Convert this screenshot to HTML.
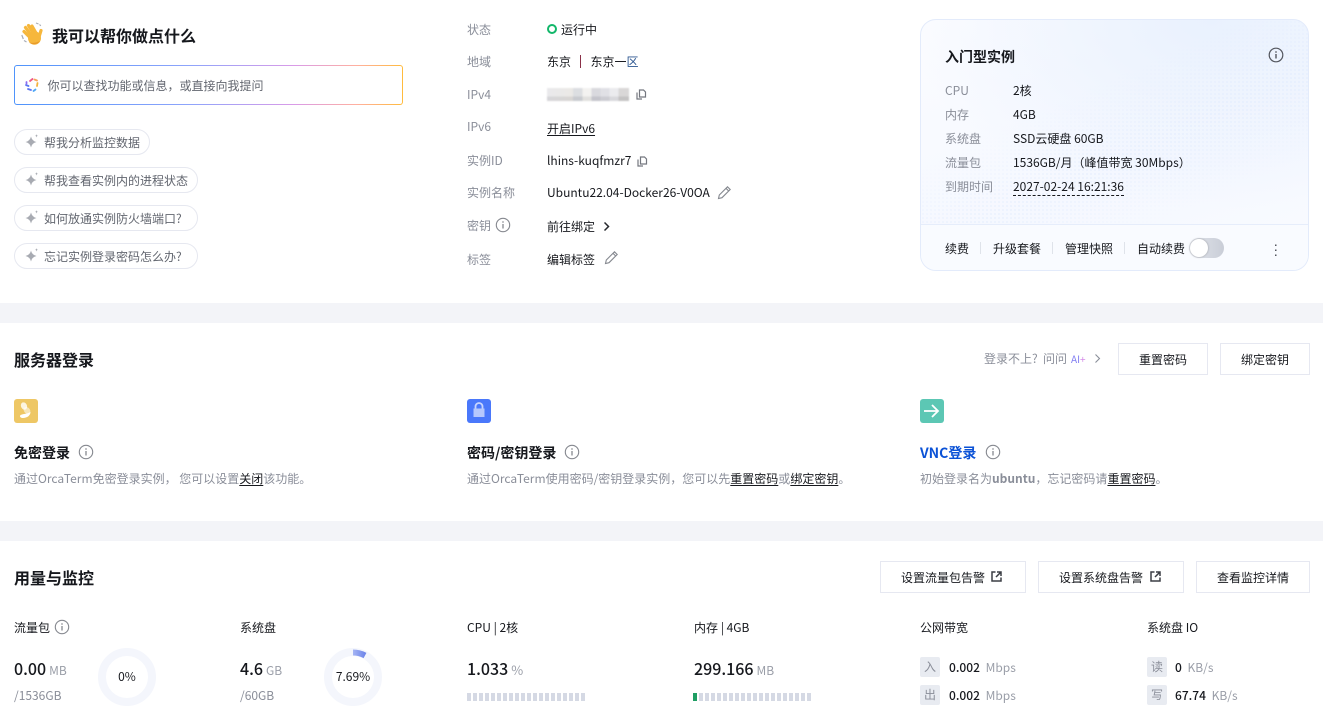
<!DOCTYPE html>
<html lang="zh"><head><meta charset="utf-8"><title>实例详情</title>
<style>
html,body{margin:0;padding:0;background:#fff}
#p{position:relative;width:1323px;height:716px;overflow:hidden;background:#fff;font-family:"Noto Sans CJK SC","Liberation Sans",sans-serif;font-size:12px;color:#16181d}
#p *{box-sizing:border-box}
.t{position:absolute;white-space:nowrap;line-height:20px;height:20px}
.g{color:#8a8e99}
.h{font-weight:700;font-size:16px;color:#16181d}
.b{font-weight:700;font-size:14px}
.u{text-decoration:underline;text-underline-offset:2px;color:#16181d}
.a{position:absolute}
.chip{position:absolute;left:14px;height:26px;border:1px solid #e6e8f0;border-radius:13px;background:#fff;color:#62666f;line-height:25px;padding-left:29px;white-space:nowrap}
.btn{position:absolute;height:32px;border:1px solid #e6e8f1;background:#fff;text-align:center;line-height:30px;padding-top:1px;color:#16181d;white-space:nowrap}
.bar{position:absolute;top:693px;height:8px;width:118px;background:repeating-linear-gradient(90deg,#d5d9e4 0,#d5d9e4 4px,transparent 4px,transparent 6px)}
.tag{position:absolute;left:0;width:20px;height:20px;background:#e8ebf1;color:#8a8e99;text-align:center;line-height:20px;border-radius:2px}
.num{font-size:16px;font-weight:500;line-height:24px;height:24px}
.unit{font-size:12px;color:#9a9ea8;font-weight:400;margin-left:3px}
.sub{font-size:12px}
</style></head><body><div id="p">

<!-- wave -->
<svg class="a" style="left:20px;top:22px" width="24" height="24" viewBox="0 0 24 24">
<g stroke="#f6b73c" stroke-width="3.200" stroke-linecap="round" fill="none">
<path d="M9.500 15L4 9.500"/><path d="M11 13L5.500 5.500"/><path d="M13.500 11.500L8.500 3.500"/><path d="M16 11L12 4"/><path d="M19 15L21 8.500"/>
</g>
<ellipse cx="14.500" cy="16" rx="6.500" ry="6.800" fill="#f6b73c"/>
<path d="M9 20.500c3 2.500 8.500 2.500 11-1.500-3 1.800-7.500 2.200-11 1.500z" fill="#e89a2a"/>
<path d="M1.800 13l1.500 4M4 18.500l2.500 1.500M16 1l2.500 1M19.500 2.500l1.300 1.300" stroke="#a9adb6" stroke-width="1.200" fill="none"/>
</svg>
<div class="t h" style="left:52px;top:25px">我可以帮你做点什么</div>

<!-- AI input -->
<div class="a" style="left:14px;top:65px;width:389px;height:40px;border-radius:3px;padding:1px;background:linear-gradient(90deg,#4f94fb 0%,#8ea4fb 45%,#d99be8 72%,#ffb0a0 88%,#ffbb3d 100%)"><div style="width:100%;height:100%;background:#fff;border-radius:2px"></div></div>
<svg class="a" style="left:24px;top:77px" width="16" height="16" viewBox="0 0 16 16" fill="none" stroke-width="1.800" stroke-linecap="round">
<path d="M6 4l2.500-2" stroke="#ef5a8a"/><path d="M10.500 2.500l2.500 1" stroke="#f7a35c"/><path d="M13.500 6l-.5 3" stroke="#f3b33d"/><path d="M11.500 12.500l-2 1.500" stroke="#4fa8f5"/><path d="M7 13l-3-1" stroke="#5b74f2"/><path d="M2 8l2.500 1" stroke="#5b74f2"/><path d="M2.500 5l0 1.500" stroke="#8c6cf0"/>
</svg>
<div class="t" style="left:47.500px;top:76px;color:#62666f">你可以查找功能或信息，或直接向我提问</div>

<!-- chips -->
<div class="chip" style="top:129px;width:136px">帮我分析监控数据</div>
<div class="chip" style="top:167px;width:184px">帮我查看实例内的进程状态</div>
<div class="chip" style="top:205px;width:184px">如何放通实例防火墙端口?</div>
<div class="chip" style="top:243px;width:184px">忘记实例登录密码怎么办?</div>
<svg class="a" style="left:25px;top:134px" width="14" height="14" viewBox="0 0 14 14" fill="#a8abb2"><path d="M6 2.500Q7 7 11.500 8Q7 9 6 13.500Q5 9 .5 8Q5 7 6 2.500z"/><path d="M11.500 0c.2 1.300.5 1.600 1.500 1.800-1 .3-1.300.6-1.500 1.800-.2-1.200-.5-1.500-1.500-1.800 1-.2 1.300-.5 1.500-1.800z"/></svg>
<svg class="a" style="left:25px;top:172px" width="14" height="14" viewBox="0 0 14 14" fill="#a8abb2"><path d="M6 2.500Q7 7 11.500 8Q7 9 6 13.500Q5 9 .5 8Q5 7 6 2.500z"/><path d="M11.500 0c.2 1.300.5 1.600 1.500 1.800-1 .3-1.300.6-1.500 1.800-.2-1.200-.5-1.500-1.500-1.800 1-.2 1.300-.5 1.500-1.800z"/></svg>
<svg class="a" style="left:25px;top:210px" width="14" height="14" viewBox="0 0 14 14" fill="#a8abb2"><path d="M6 2.500Q7 7 11.500 8Q7 9 6 13.500Q5 9 .5 8Q5 7 6 2.500z"/><path d="M11.500 0c.2 1.300.5 1.600 1.500 1.800-1 .3-1.300.6-1.500 1.800-.2-1.200-.5-1.500-1.500-1.800 1-.2 1.300-.5 1.500-1.800z"/></svg>
<svg class="a" style="left:25px;top:248px" width="14" height="14" viewBox="0 0 14 14" fill="#a8abb2"><path d="M6 2.500Q7 7 11.500 8Q7 9 6 13.500Q5 9 .5 8Q5 7 6 2.500z"/><path d="M11.500 0c.2 1.300.5 1.600 1.500 1.800-1 .3-1.300.6-1.500 1.800-.2-1.200-.5-1.500-1.500-1.800 1-.2 1.300-.5 1.500-1.800z"/></svg>

<!-- info -->
<div class="t g" style="left:467px;top:20px">状态</div>
<div class="a" style="left:547px;top:24px;width:10px;height:10px;border:2px solid #12b76a;border-radius:50%"></div>
<div class="t" style="left:561px;top:20px">运行中</div>
<div class="t g" style="left:467px;top:52px">地域</div>
<div class="t" style="left:547px;top:52px">东京</div>
<div class="a" style="left:580px;top:55px;width:1px;height:13px;background:#8a3048"></div>
<div class="t" style="left:590.500px;top:52px">东京一<span style="color:#2c5690">区</span></div>
<div class="t g" style="left:467px;top:85px">IPv4</div>
<div class="a" style="left:547px;top:88px;width:82px;height:13px;filter:blur(.7px);background:linear-gradient(180deg,rgba(255,255,255,.2) 0,rgba(255,255,255,.2) 65%,rgba(130,130,135,.14) 65%,rgba(130,130,135,.14) 100%),linear-gradient(90deg,#e4e4e7 0,#e6e3df 32%,#d3d6da 32%,#d3d6da 43%,#f0efec 43%,#f0efec 54%,#cfcfd6 54%,#cfcfd6 65%,#d8d8de 65%,#d8d8de 76%,#e6e6ea 76%,#e6e6ea 87%,#cfcdcd 87%,#cfcdcd 100%)"></div>
<svg class="a" style="left:636px;top:89px" width="11" height="11" viewBox="0 0 11 11" fill="none" stroke="#74777f" stroke-width="1.200"><path d="M3.500 1h4l2 2v5h-6zM1 3.500V10h5"/></svg>
<div class="t g" style="left:467px;top:117px">IPv6</div>
<div class="t u" style="left:547px;top:119px">开启IPv6</div>
<div class="t g" style="left:467px;top:151px">实例ID</div>
<div class="t" style="left:547px;top:151px">lhins-kuqfmzr7</div>
<svg class="a" style="left:637px;top:156px" width="11" height="11" viewBox="0 0 11 11" fill="none" stroke="#74777f" stroke-width="1.200"><path d="M3.500 1h4l2 2v5h-6zM1 3.500V10h5"/></svg>
<div class="t g" style="left:467px;top:183px">实例名称</div>
<div class="t" style="left:547px;top:183px">Ubuntu22.04-Docker26-V0OA</div>
<svg class="a" style="left:717px;top:185px" width="15" height="15" viewBox="0 0 15 15" fill="none" stroke="#85888f" stroke-width="1.100"><path d="M1.500 13.500l.8-3.500L10.500 1.800l2.700 2.700L5 12.700zM9 3.300l2.700 2.700"/></svg>
<div class="t g" style="left:467px;top:216px">密钥</div>
<svg class="a" style="left:495px;top:217px" width="16" height="16" viewBox="0 0 16 16" fill="none" stroke="#85888f"><circle cx="8" cy="8" r="6.700" stroke-width="1.100"/><path d="M8 7v4.500M8 4.300v1.400" stroke-width="1.300"/></svg>
<div class="t" style="left:547px;top:217px">前往绑定</div>
<svg class="a" style="left:602px;top:221px" width="9" height="11" viewBox="0 0 9 11" fill="none" stroke="#26282d" stroke-width="1.500"><path d="M2.500 1.500l4 4-4 4"/></svg>
<div class="t g" style="left:467px;top:250px">标签</div>
<div class="t" style="left:547px;top:250px">编辑标签</div>
<svg class="a" style="left:604px;top:250px" width="15" height="15" viewBox="0 0 15 15" fill="none" stroke="#85888f" stroke-width="1.100"><path d="M1.500 13.500l.8-3.500L10.500 1.800l2.700 2.700L5 12.700zM9 3.300l2.700 2.700"/></svg>

<!-- card -->
<div class="a" style="left:920px;top:19px;width:389px;height:252px;border:1px solid #e3ebfb;border-radius:16px;overflow:hidden;background:radial-gradient(ellipse 300px 190px at 75% 0%,#e9f1fe 0%,rgba(233,241,254,0) 100%),linear-gradient(160deg,#fbfcff 0%,#f5f8ff 60%,#f9fbff 100%)">
 <div class="a" style="left:0;top:0;width:389px;height:205px;background-image:radial-gradient(#d4e3fd 0.8px,transparent 1px);background-size:4px 4px;-webkit-mask-image:linear-gradient(155deg,transparent 38%,#000 60%,transparent 82%);mask-image:linear-gradient(155deg,transparent 38%,#000 60%,transparent 82%);opacity:.35"></div>
 <div class="a" style="left:0;top:204px;width:389px;height:48px;border-top:1px solid #e6edfb;background:#f9fbff"></div>
</div>
<div class="t" style="left:945px;top:47px;font-size:14px;font-weight:700">入门型实例</div>
<svg class="a" style="left:1268px;top:47px" width="16" height="16" viewBox="0 0 16 16" fill="none" stroke="#53565e"><circle cx="8" cy="8" r="6.800" stroke-width="1.200"/><path d="M8 7v4.500M8 4.300v1.400" stroke-width="1.400"/></svg>
<div class="t g" style="left:945px;top:81px">CPU</div><div class="t" style="left:1013px;top:81px">2核</div>
<div class="t g" style="left:945px;top:105px">内存</div><div class="t" style="left:1013px;top:105px">4GB</div>
<div class="t g" style="left:945px;top:129px">系统盘</div><div class="t" style="left:1013px;top:129px">SSD云硬盘 60GB</div>
<div class="t g" style="left:945px;top:153px">流量包</div><div class="t" style="left:1013px;top:153px">1536GB/月（峰值带宽 30Mbps）</div>
<div class="t g" style="left:945px;top:177px">到期时间</div><div class="t" style="left:1013px;top:177px;border-bottom:0">2027-02-24 16:21:36</div>
<div class="a" style="left:1013px;top:195px;width:111px;border-top:1px dashed #16181d"></div>
<div class="t" style="left:945px;top:239px">续费</div>
<div class="a" style="left:980px;top:242px;width:1px;height:12px;background:#dfe3ea"></div>
<div class="t" style="left:993px;top:239px">升级套餐</div>
<div class="a" style="left:1052px;top:242px;width:1px;height:12px;background:#dfe3ea"></div>
<div class="t" style="left:1065px;top:239px">管理快照</div>
<div class="a" style="left:1124px;top:242px;width:1px;height:12px;background:#dfe3ea"></div>
<div class="t" style="left:1137px;top:239px">自动续费</div>
<div class="a" style="left:1189px;top:238px;width:35px;height:20px;border-radius:10px;background:linear-gradient(90deg,#e2e5ec,#c9cdd7)"></div>
<div class="a" style="left:1190px;top:239px;width:18px;height:18px;border-radius:50%;background:#fff;box-shadow:0 0 2px rgba(0,0,0,.3)"></div>
<svg class="a" style="left:1274px;top:244px" width="4" height="13" viewBox="0 0 4 13" fill="#53565e"><rect x="1" y="0.500" width="1.500" height="1.500"/><rect x="1" y="5.500" width="1.500" height="1.500"/><rect x="1" y="10.500" width="1.500" height="1.500"/></svg>

<!-- separators -->
<div class="a" style="left:0;top:303px;width:1323px;height:20px;background:#f3f4f8"></div>
<div class="a" style="left:0;top:521px;width:1323px;height:20px;background:#f3f4f8"></div>

<!-- login -->
<div class="t h" style="left:14px;top:349px">服务器登录</div>
<div class="t g" style="left:984px;top:349px">登录不上?</div>
<div class="t g" style="left:1043px;top:349px">问问</div>
<div class="t" style="left:1071px;top:349px;color:#7f7cf2;font-size:10px">AI<span style="color:#d58be8">+</span></div>
<svg class="a" style="left:1093px;top:353px" width="9" height="11" viewBox="0 0 9 11" fill="none" stroke="#8a8e99" stroke-width="1.100"><path d="M2.500 1.500l4 4-4 4"/></svg>
<div class="btn" style="left:1118px;top:343px;width:90px">重置密码</div>
<div class="btn" style="left:1220px;top:343px;width:90px">绑定密钥</div>

<div class="a" style="left:14px;top:399px;width:24px;height:24px;background:#eec765;border-radius:3px"></div>
<svg class="a" style="left:14px;top:399px" width="24" height="24" viewBox="0 0 24 24" fill="#fff"><ellipse cx="10" cy="7" rx="3" ry="3.800" transform="rotate(-25 10 7)" opacity=".8"/><ellipse cx="13" cy="11.500" rx="3" ry="3.800" transform="rotate(-40 13 11.500)" opacity=".55"/><path d="M16.500 13c0 3.500-3.500 6-7.500 6-2 0-3.200-1-3-2.300 1.500-2.200 6-1 10.500-3.700z"/></svg>
<div class="a" style="left:467px;top:399px;width:24px;height:24px;background:#4a78fb;border-radius:3px"></div>
<svg class="a" style="left:467px;top:399px" width="24" height="24" viewBox="0 0 24 24"><path d="M8.500 10V7.500a3.500 3.500 0 0 1 7 0V10" fill="none" stroke="#c8d5fd" stroke-width="1.800"/><rect x="6.500" y="9.500" width="11" height="8.500" fill="#b6c8fd"/></svg>
<div class="a" style="left:920px;top:399px;width:24px;height:24px;background:#5cc7b4;border-radius:3px"></div>
<svg class="a" style="left:920px;top:399px" width="24" height="24" viewBox="0 0 24 24" fill="none" stroke="#fff" stroke-width="1.800"><path d="M4 12h14M12 6l6 6-6 6"/></svg>

<div class="t b" style="left:14px;top:443px">免密登录</div>
<svg class="a" style="left:78px;top:444px" width="16" height="16" viewBox="0 0 16 16" fill="none" stroke="#85888f"><circle cx="8" cy="8" r="6.700" stroke-width="1.100"/><path d="M8 7v4.500M8 4.300v1.400" stroke-width="1.300"/></svg>
<div class="t b" style="left:467px;top:443px">密码/密钥登录</div>
<svg class="a" style="left:564px;top:444px" width="16" height="16" viewBox="0 0 16 16" fill="none" stroke="#85888f"><circle cx="8" cy="8" r="6.700" stroke-width="1.100"/><path d="M8 7v4.500M8 4.300v1.400" stroke-width="1.300"/></svg>
<div class="t b" style="left:920px;top:443px;color:#0b52d6">VNC登录</div>
<svg class="a" style="left:985px;top:444px" width="16" height="16" viewBox="0 0 16 16" fill="none" stroke="#85888f"><circle cx="8" cy="8" r="6.700" stroke-width="1.100"/><path d="M8 7v4.500M8 4.300v1.400" stroke-width="1.300"/></svg>

<div class="t g" style="left:14px;top:469px">通过OrcaTerm免密登录实例， 您可以设置<span class="u">关闭</span>该功能。</div>
<div class="t g" style="left:467px;top:469px">通过OrcaTerm使用密码/密钥登录实例，您可以先<span class="u">重置密码</span>或<span class="u">绑定密钥</span>。</div>
<div class="t g" style="left:920px;top:469px">初始登录名为<b>ubuntu</b>，忘记密码请<span class="u">重置密码</span>。</div>

<!-- usage -->
<div class="t h" style="left:14px;top:567px">用量与监控</div>
<div class="btn" style="left:880px;top:561px;width:146px;padding-right:20px">设置流量包告警</div>
<svg class="a" style="left:991px;top:571px" width="11" height="11" viewBox="0 0 11 11" fill="none" stroke="#3b3e45" stroke-width="1.500"><path d="M4.500 1H1v9h9V6.500M6 1h4v4M10 1L5 6"/></svg>
<div class="btn" style="left:1038px;top:561px;width:146px;padding-right:20px">设置系统盘告警</div>
<svg class="a" style="left:1150px;top:571px" width="11" height="11" viewBox="0 0 11 11" fill="none" stroke="#3b3e45" stroke-width="1.500"><path d="M4.500 1H1v9h9V6.500M6 1h4v4M10 1L5 6"/></svg>
<div class="btn" style="left:1196px;top:561px;width:114px">查看监控详情</div>

<div class="t" style="left:14px;top:618px">流量包</div>
<svg class="a" style="left:54px;top:619px" width="16" height="16" viewBox="0 0 16 16" fill="none" stroke="#85888f"><circle cx="8" cy="8" r="6.700" stroke-width="1.100"/><path d="M8 7v4.500M8 4.300v1.400" stroke-width="1.300"/></svg>
<div class="t" style="left:240px;top:618px">系统盘</div>
<div class="t" style="left:467px;top:618px">CPU | 2核</div>
<div class="t" style="left:694px;top:618px">内存 | 4GB</div>
<div class="t" style="left:920px;top:618px">公网带宽</div>
<div class="t" style="left:1147px;top:618px">系统盘 IO</div>

<div class="t num" style="left:14px;top:656px">0.00<span class="unit">MB</span></div>
<div class="t g sub" style="left:14px;top:686px">/1536GB</div>
<div class="a" style="left:98px;top:648px;width:58px;height:58px;border:8px solid #f4f6fc;border-radius:50%"></div>
<div class="t" style="left:98px;top:667px;width:58px;text-align:center">0%</div>

<div class="t num" style="left:240px;top:656px">4.6<span class="unit">GB</span></div>
<div class="t g sub" style="left:240px;top:686px">/60GB</div>
<div class="a" style="left:324px;top:648px;width:58px;height:58px;border:8px solid #f4f6fc;border-radius:50%"></div>
<svg class="a" style="left:324px;top:648px" width="58" height="58" viewBox="0 0 58 58" fill="none"><defs><linearGradient id="ar" x1="0" x2="1" y1="0" y2="0"><stop offset="0" stop-color="#a5b5f4"/><stop offset="1" stop-color="#6f86ea"/></linearGradient></defs><path d="M29 4.500a25 25 0 0 1 12 3" stroke="url(#ar)" stroke-width="6"/></svg>
<div class="t" style="left:324px;top:667px;width:58px;text-align:center">7.69%</div>

<div class="t num" style="left:467px;top:656px">1.033<span class="unit" style="font-size:13px">%</span></div>
<div class="bar" style="left:467px"></div>
<div class="t num" style="left:694px;top:656px">299.166<span class="unit">MB</span></div>
<div class="bar" style="left:693px"></div>
<div class="a" style="left:693px;top:693px;width:4px;height:8px;background:#1f9e63"></div>

<div class="a" style="left:920px;top:657px;width:200px;height:60px">
 <div class="tag" style="top:0">入</div><div class="tag" style="top:28px">出</div>
</div>
<div class="t" style="left:949px;top:658px;font-weight:500">0.002 <span style="color:#9a9ea8;font-weight:400;margin-left:3px">Mbps</span></div>
<div class="t" style="left:949px;top:686px;font-weight:500">0.002 <span style="color:#9a9ea8;font-weight:400;margin-left:3px">Mbps</span></div>
<div class="a" style="left:1147px;top:657px;width:150px;height:60px">
 <div class="tag" style="top:0">读</div><div class="tag" style="top:28px">写</div>
</div>
<div class="t" style="left:1175px;top:658px;font-weight:500">0 <span style="color:#9a9ea8;font-weight:400;margin-left:3px">KB/s</span></div>
<div class="t" style="left:1175px;top:686px;font-weight:500">67.74 <span style="color:#9a9ea8;font-weight:400;margin-left:3px">KB/s</span></div>
</div></body></html>
